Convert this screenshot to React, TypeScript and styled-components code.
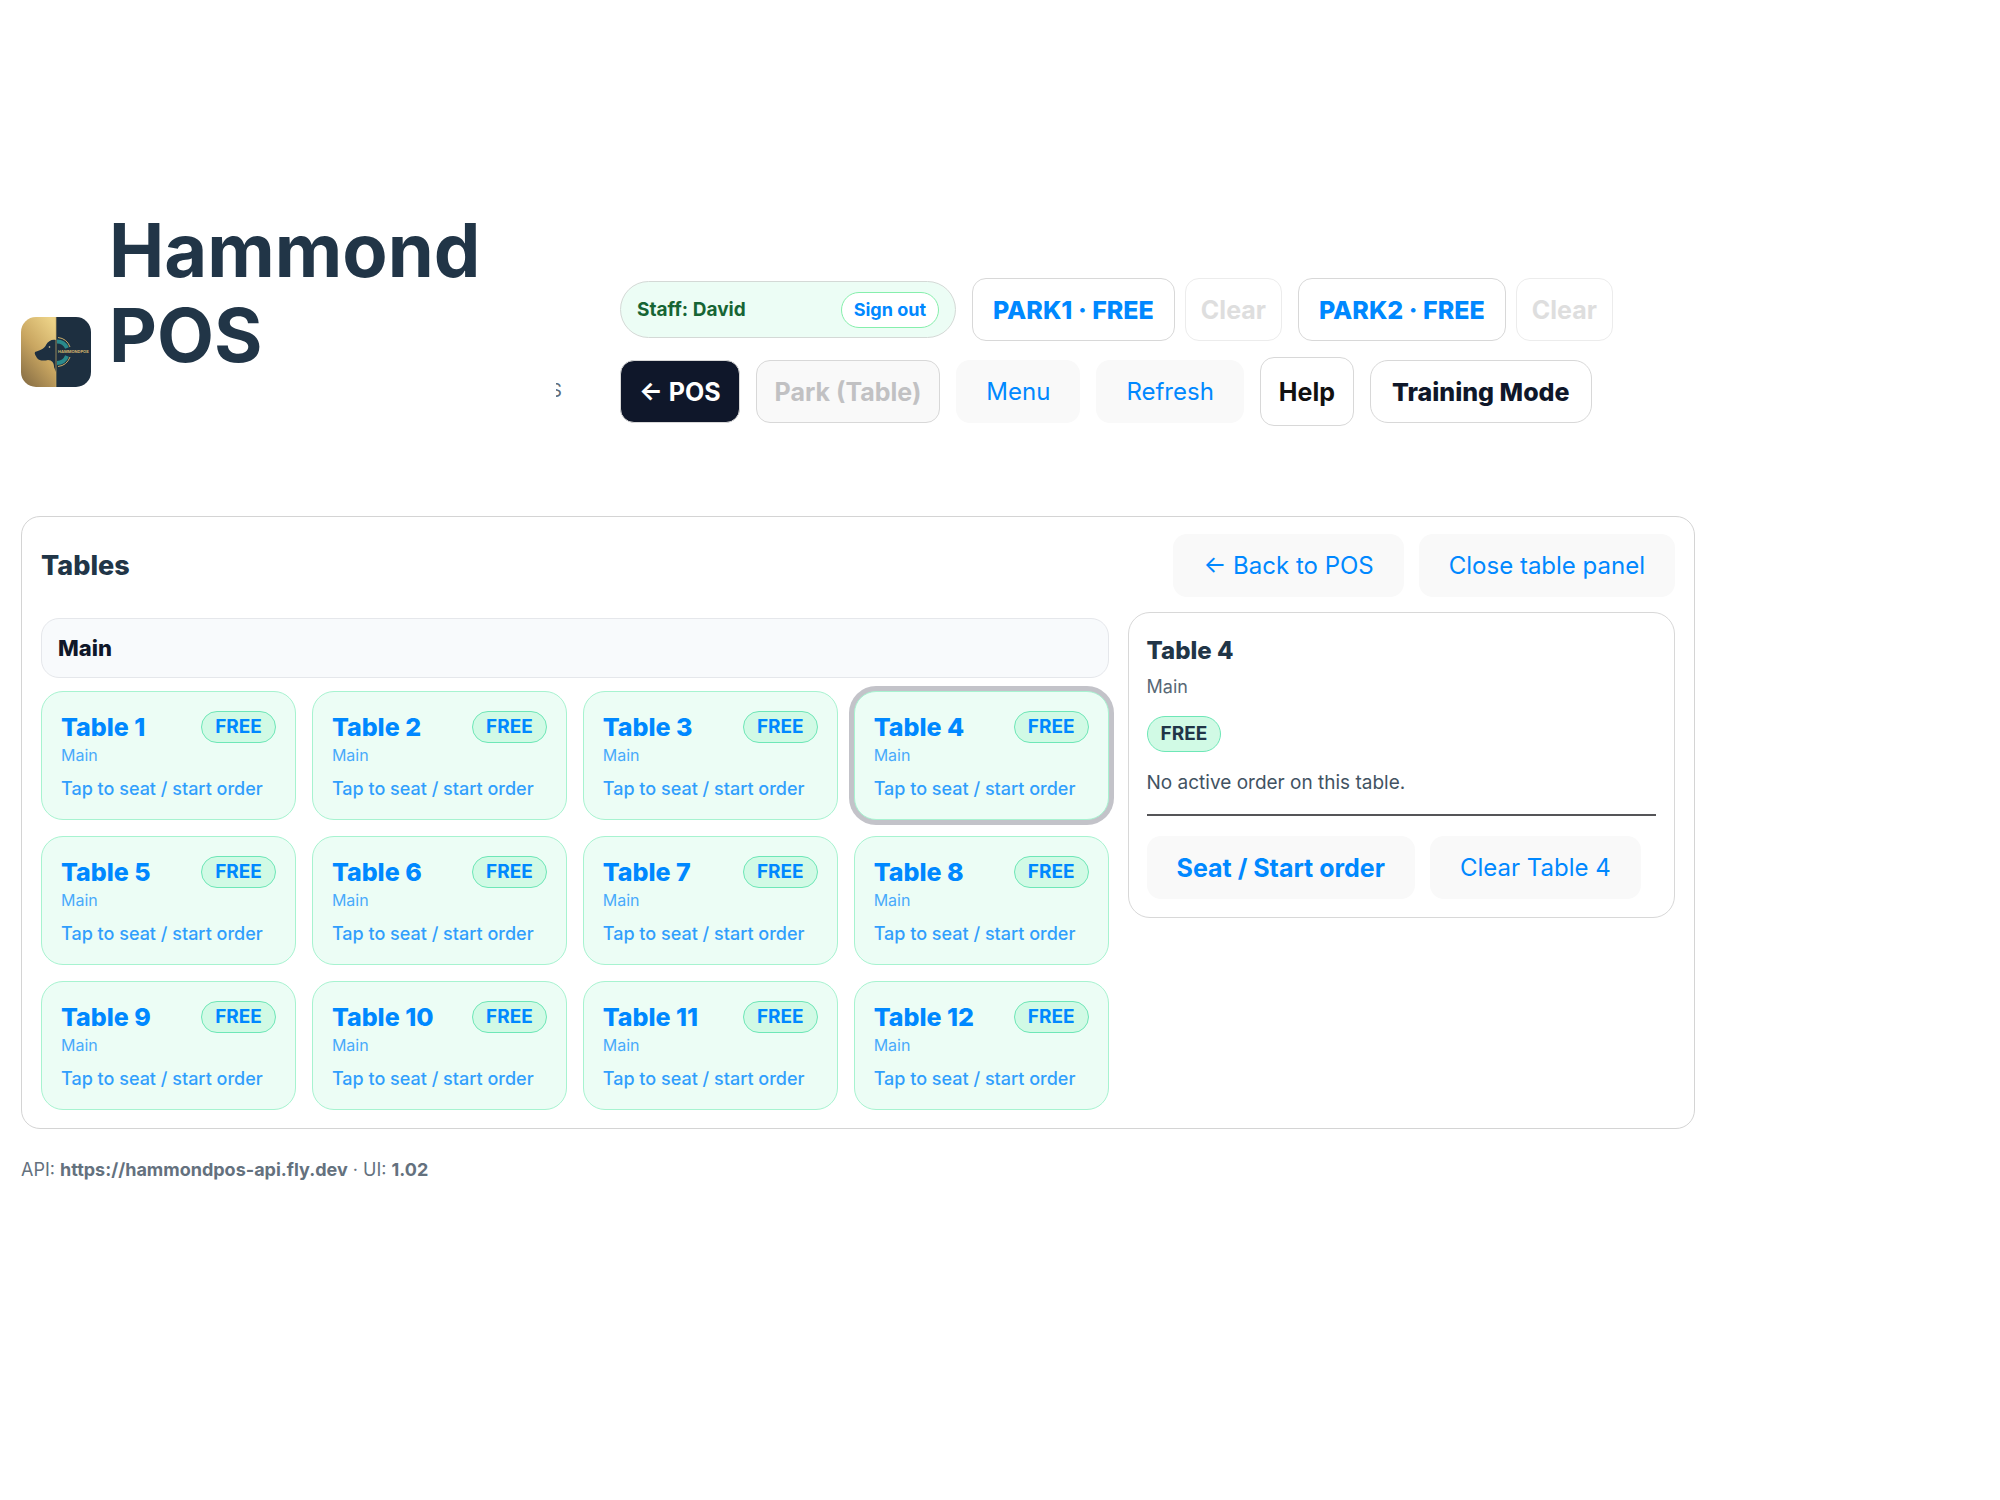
import React, { useState } from "react";
import styled, { createGlobalStyle, css } from "styled-components";

const GlobalStyle = createGlobalStyle`
  *, *::before, *::after { box-sizing: border-box; }
  body {
    margin: 0;
    background: #fff;
    color: #213547;
    font-family: Inter, "Liberation Sans", sans-serif;
    font-size: 18px;
    line-height: 24px;
    -webkit-font-smoothing: antialiased;
  }
  button { font-family: inherit; cursor: pointer; white-space: nowrap; }
  h1, h2, h3, p { margin: 0; }
`;

const Page = styled.main`
  max-width: 1716px;
  padding: 208px 21px 40px;
`;

const Header = styled.header`
  display: flex;
  align-items: center;
  justify-content: space-between;
  min-height: 288px;
  margin-bottom: 20px;
`;

const Brand = styled.div`
  display: flex;
  align-items: center;
  align-self: stretch;
  gap: 18px;
  flex: 0 0 541px;
`;

const Logo = styled.svg`
  width: 70px;
  height: 70px;
  flex: none;
`;

const BrandText = styled.div`
  flex: 1;
  align-self: flex-start;
`;

const BrandTitle = styled.h1`
  font-size: 74px;
  line-height: 85px;
  font-weight: 700;
`;

const Tagline = styled.p`
  display: flex;
  justify-content: flex-end;
  width: 6px;
  margin-left: auto;
  overflow: hidden;
  font-size: 19px;
  line-height: 26px;
  color: #5b6b7a;
`;

const Toolbar = styled.nav`
  display: flex;
  flex-wrap: wrap;
  align-items: center;
  gap: 16px;
  flex: 0 1 1075px;
`;

const ParkGroup = styled.div`
  display: flex;
  gap: 10px;
`;

const StaffPill = styled.div`
  display: flex;
  align-items: center;
  justify-content: space-between;
  width: 336px;
  height: 57px;
  padding: 0 16px;
  border: 1px solid #d4d9d6;
  border-radius: 29px;
  background: #ecfdf5;
  color: #166534;
  font-size: 19px;
  font-weight: 700;
`;

const SignOut = styled.button`
  height: 36px;
  padding: 0 12px;
  border: 1px solid #86efac;
  border-radius: 18px;
  background: #fff;
  color: #08f;
  font-size: 18px;
  font-weight: 700;
`;

type Tone = "plain" | "outline" | "dark" | "muted";

const tones = {
  plain: css`
    background: #f9f9f9;
    border-color: transparent;
    color: #08f;
  `,
  outline: css`
    background: #fff;
    border-color: #d8d8d8;
    color: #08f;
  `,
  dark: css`
    background: #0f172a;
    border-color: #d8d8d8;
    color: #fff;
  `,
  muted: css`
    background: #f9f9f9;
    border-color: #d8d8d8;
    color: #c1c1c3;
  `,
};

const Button = styled.button<{ $tone?: Tone; $pad?: number; $weight?: number; $ink?: string; $tall?: boolean; $radius?: number }>`
  height: ${(p) => (p.$tall ? 69 : 63)}px;
  padding: 0 ${(p) => p.$pad ?? 29}px;
  border: 1px solid;
  border-radius: ${(p) => p.$radius ?? 14}px;
  font-size: ${(p) => (p.$weight ? 25 : 24)}px;
  font-weight: ${(p) => p.$weight ?? 400};
  ${(p) => tones[p.$tone ?? "plain"]}
  ${(p) => p.$ink && `color: ${p.$ink};`}
`;

const ClearButton = styled(Button)`
  border-color: #ececec;
  color: #dedede;
`;

const Panel = styled.section`
  padding: 17px 19px 18px;
  border: 1px solid #d4d4d4;
  border-radius: 19px;
`;

const PanelHead = styled.div`
  display: flex;
  align-items: center;
  justify-content: space-between;
  margin-bottom: 15px;
`;

const PanelTitle = styled.h2`
  font-size: 27px;
  line-height: 32px;
  font-weight: 800;
`;

const ButtonRow = styled.div`
  display: flex;
  gap: 15px;
`;

const Columns = styled.div`
  display: grid;
  grid-template-columns: minmax(0, 39fr) minmax(0, 20fr);
  align-items: start;
  gap: 19px;
`;

const Floor = styled.div`
  padding-top: 6px;
`;

const AreaBar = styled.h3`
  height: 60px;
  padding: 0 16px;
  margin-bottom: 13px;
  border: 1px solid #e5e7eb;
  border-radius: 18px;
  background: #f8fafc;
  color: #0f172a;
  font-size: 22px;
  line-height: 58px;
  font-weight: 800;
`;

const TableGrid = styled.div`
  display: grid;
  grid-template-columns: repeat(4, minmax(0, 1fr));
  gap: 16px;
`;

const TableCard = styled.button<{ $selected: boolean }>`
  display: block;
  padding: 19px;
  border: 1px solid #a7f3d0;
  border-radius: 22px;
  background: #ecfdf5;
  color: #08f;
  text-align: left;
  box-shadow: ${(p) => (p.$selected ? "0 0 0 5px #c3c3c9" : "none")};
`;

const CardTop = styled.span`
  display: flex;
  align-items: center;
  justify-content: space-between;
`;

const CardName = styled.span`
  font-size: 25px;
  line-height: 32px;
  font-weight: 800;
`;

const CardArea = styled.span`
  display: block;
  margin-bottom: 10px;
  font-size: 16px;
  line-height: 25px;
  opacity: 0.7;
`;

const CardHint = styled.span`
  display: block;
  font-size: 18px;
  line-height: 22px;
  font-weight: 500;
  opacity: 0.8;
`;

const Badge = styled.span<{ $large?: boolean }>`
  display: inline-block;
  padding: 0 13px;
  border: 1px solid #6ee7b7;
  border-radius: 18px;
  background: #d1fae5;
  font-size: 19px;
  line-height: ${(p) => (p.$large ? 34 : 30)}px;
  font-weight: 700;
`;

const Detail = styled.aside`
  display: flex;
  flex-direction: column;
  align-items: flex-start;
  padding: 18px;
  border: 1px solid #d8d8d8;
  border-radius: 22px;
`;

const DetailTitle = styled.h3`
  font-size: 24px;
  line-height: 40px;
  font-weight: 800;
`;

const DetailArea = styled.p`
  margin: 4px 0 17px;
  font-size: 18px;
  line-height: 24px;
  opacity: 0.75;
`;

const DetailNote = styled.p`
  margin: 19px 0;
  font-size: 19px;
  line-height: 24px;
  opacity: 0.85;
`;

const Rule = styled.hr`
  width: 100%;
  height: 2px;
  margin: 0 0 20px;
  border: 0;
  background: #555558;
`;

const Footer = styled.footer`
  margin-top: 29px;
  font-size: 18px;
  line-height: 24px;
  color: #64717e;
`;

function BrandLogo() {
  return (
    <Logo viewBox="0 0 70 70" role="img" aria-label="HammondPOS logo">
      <defs>
        <linearGradient id="gold" x1="0.8" y1="0" x2="0.2" y2="1">
          <stop offset="0" stopColor="#ecd287" />
          <stop offset="0.5" stopColor="#c9a661" />
          <stop offset="1" stopColor="#8b7146" />
        </linearGradient>
        <clipPath id="tile">
          <rect width="70" height="70" rx="15" />
        </clipPath>
      </defs>
      <g clipPath="url(#tile)">
        <rect width="35" height="70" fill="url(#gold)" />
        <rect x="35" width="35" height="70" fill="#1d2f40" />
        <path d="M35 23C31 22 27 24 25 28C24 31 20 33 14 35C13 37 15 39 16 41C18 44 23 44 27 43C31 43 33 46 33 50L35 55Z" fill="#1d2f40" />
        <circle cx="28.500" cy="30" r="0.8" fill="#e8d9a8" />
        <g fill="none">
          <path d="M36 24.500A11 11 0 0 1 46 31M46 39A11 11 0 0 1 36 46" stroke="#2a8a8c" strokeWidth="4" />
          <path d="M37 20.500A14.500 14.500 0 0 1 49 30M49 40A14.500 14.500 0 0 1 37 49.500" stroke="#c9ad69" strokeWidth="1" />
          <path d="M35 0V70" stroke="#c9ad69" strokeWidth="0.7" />
        </g>
      </g>
      <text x="37" y="36" fontSize="4" fontWeight="700" fill="#d3b76f">HAMMONDPOS</text>
    </Logo>
  );
}

const tables = Array.from({ length: 12 }, (_, i) => i + 1);

export default function App() {
  const [selected, setSelected] = useState(4);
  return (
    <>
      <GlobalStyle />
      <Page>
        <Header>
          <Brand>
            <BrandLogo />
            <BrandText>
              <BrandTitle>Hammond POS</BrandTitle>
              <Tagline>S</Tagline>
            </BrandText>
          </Brand>
          <Toolbar>
            <StaffPill>
              <span>Staff: David</span>
              <SignOut>Sign out</SignOut>
            </StaffPill>
            {["PARK1", "PARK2"].map((name) => (
              <ParkGroup key={name}>
                <Button $tone="outline" $pad={20} $weight={800}>{name} · FREE</Button>
                <ClearButton $tone="outline" $pad={15} $weight={700} disabled>Clear</ClearButton>
              </ParkGroup>
            ))}
            <Button $tone="dark" $pad={18} $weight={700}>← POS</Button>
            <Button $tone="muted" $pad={18} $weight={700} disabled>Park (Table)</Button>
            <Button>Menu</Button>
            <Button>Refresh</Button>
            <Button $tone="outline" $pad={18} $weight={700} $ink="#111" $tall>Help</Button>
            <Button $tone="outline" $pad={21} $weight={800} $ink="#0f172a" $radius={18}>Training Mode</Button>
          </Toolbar>
        </Header>

        <Panel>
          <PanelHead>
            <PanelTitle>Tables</PanelTitle>
            <ButtonRow>
              <Button>← Back to POS</Button>
              <Button>Close table panel</Button>
            </ButtonRow>
          </PanelHead>
          <Columns>
            <Floor>
              <AreaBar>Main</AreaBar>
              <TableGrid>
                {tables.map((n) => (
                  <TableCard key={n} $selected={n === selected} onClick={() => setSelected(n)}>
                    <CardTop>
                      <CardName>Table {n}</CardName>
                      <Badge>FREE</Badge>
                    </CardTop>
                    <CardArea>Main</CardArea>
                    <CardHint>Tap to seat / start order</CardHint>
                  </TableCard>
                ))}
              </TableGrid>
            </Floor>
            <Detail>
              <DetailTitle>Table {selected}</DetailTitle>
              <DetailArea>Main</DetailArea>
              <Badge $large>FREE</Badge>
              <DetailNote>No active order on this table.</DetailNote>
              <Rule />
              <ButtonRow>
                <Button $weight={700}>Seat / Start order</Button>
                <Button>Clear Table {selected}</Button>
              </ButtonRow>
            </Detail>
          </Columns>
        </Panel>

        <Footer>
          API: <strong>https://hammondpos-api.fly.dev</strong> · UI: <strong>1.02</strong>
        </Footer>
      </Page>
    </>
  );
}
